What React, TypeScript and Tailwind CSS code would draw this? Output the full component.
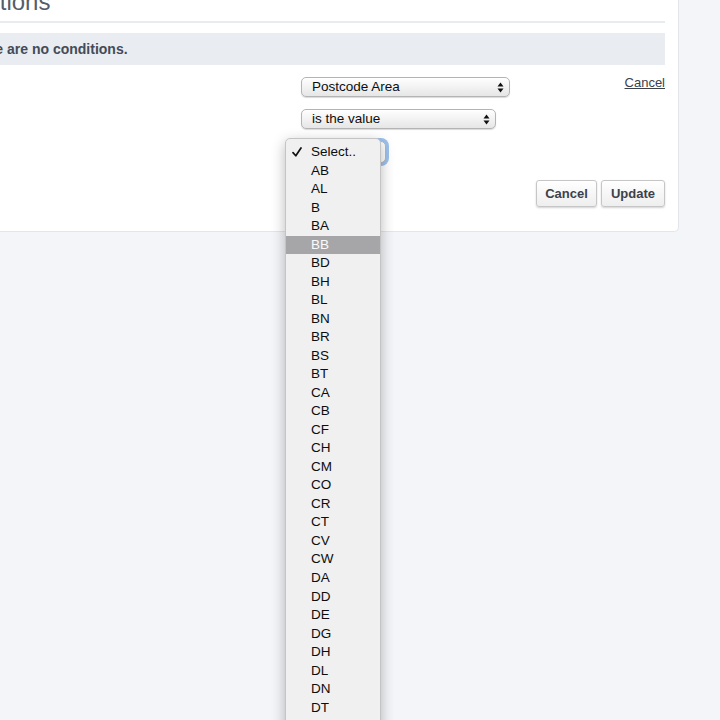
import React from "react";

const codes = [
  "AB","AL","B","BA","BB","BD","BH","BL","BN","BR","BS","BT","CA","CB","CF","CH","CM","CO","CR","CT","CV","CW","DA","DD","DE","DG","DH","DL","DN","DT","DY","E","EC","EH","EN","EX",
];

function Arrows() {
  return (
    <svg width="7" height="11" viewBox="0 0 7 11" className="shrink-0">
      <path d="M3.5 0.5 L6.5 4.5 L0.5 4.5 Z" fill="#111" />
      <path d="M3.5 10.5 L6.5 6.5 L0.5 6.5 Z" fill="#111" />
    </svg>
  );
}

function FakeSelect({ label, w }: { label: string; w: string }) {
  return (
    <div
      className={`${w} h-[20px] flex items-center justify-between pl-[10px] pr-[5px] rounded-[5px] border border-[#b4b4b4] bg-gradient-to-b from-[#ffffff] to-[#e6e6e6] shadow-[0_1px_1px_rgba(0,0,0,0.15)] text-[13.5px] text-[#0d0d0d] leading-none`}
    >
      <span>{label}</span>
      <Arrows />
    </div>
  );
}

export default function App() {
  return (
    <div className="min-h-screen bg-[#f4f5f9] overflow-hidden" style={{ fontFamily: '"Liberation Sans", Arial, sans-serif' }}>
      <div className="w-[679px] bg-white border-r border-b border-[#e2e5ea] rounded-br-[5px] pr-[13px] pb-[24px]">
        <div className="mt-[-13px] ml-[-63px] h-[29px] text-[24px] leading-[29px] font-light text-[#555c6a] whitespace-nowrap">
          Conditions
        </div>
        <div className="mt-[5px] h-[2px] bg-[#e8ebef]" />
        <div className="mt-[10px] h-[32px] bg-[#e9ecf0] flex items-center overflow-hidden">
          <span className="ml-[-35px] text-[14px] font-bold text-[#434b58] whitespace-nowrap">
            There are no conditions.
          </span>
        </div>

        <div className="mt-[12px] flex">
          <div className="w-[301px] shrink-0" />
          <div className="flex flex-col gap-[12px]">
            <FakeSelect label="Postcode Area" w="w-[209px]" />
            <FakeSelect label="is the value" w="w-[195px]" />
            <div className="relative w-[85px] h-[22px]">
              <div className="w-[85px] h-[22px] rounded-[5px] border border-[#b9b9b9] bg-white shadow-[0_0_0_3px_#9cc2ee]" />
              <div className="absolute left-[-16px] top-[-3px] w-[96px] bg-[#f0f0f0] border border-[#c4c4c4] rounded-[5px] shadow-[0_4px_14px_rgba(0,0,0,0.28)] pt-[4px] pb-[4px] z-10">
                <div className="h-[18.53px] flex items-center text-[13.5px] text-[#0d0d0d]">
                  <span className="w-[25px] pl-[6px] flex items-center">
                    <svg width="10" height="10" viewBox="0 0 10 10">
                      <path d="M1 5.6 L3.8 8.8 L9 1" fill="none" stroke="#111" strokeWidth="1.7" strokeLinecap="round" strokeLinejoin="round" />
                    </svg>
                  </span>
                  <span>Select..</span>
                </div>
                {codes.map((c) => (
                  <div
                    key={c}
                    className={`h-[18.53px] flex items-center pl-[25px] text-[13.5px] ${c === "BB" ? "bg-[#a6a6a8] text-[#fafafa]" : "text-[#0d0d0d]"}`}
                  >
                    {c}
                  </div>
                ))}
              </div>
            </div>
          </div>
          <div className="flex-1" />
          <a className="mt-[-2px] h-[16px] text-[13px] leading-[16px] text-[#3b414c] underline">Cancel</a>
        </div>

        <div className="mt-[17px] flex justify-end gap-[4px]">
          <button className="w-[61px] h-[27px] rounded-[3px] border border-[#c6c6c6] bg-gradient-to-b from-[#ffffff] to-[#eeeeee] shadow-[0_1px_2px_rgba(0,0,0,0.18)] text-[13px] font-bold text-[#3b414c]">
            Cancel
          </button>
          <button className="w-[64px] h-[27px] rounded-[3px] border border-[#c6c6c6] bg-gradient-to-b from-[#ffffff] to-[#eeeeee] shadow-[0_1px_2px_rgba(0,0,0,0.18)] text-[13px] font-bold text-[#3b414c]">
            Update
          </button>
        </div>
      </div>
    </div>
  );
}
